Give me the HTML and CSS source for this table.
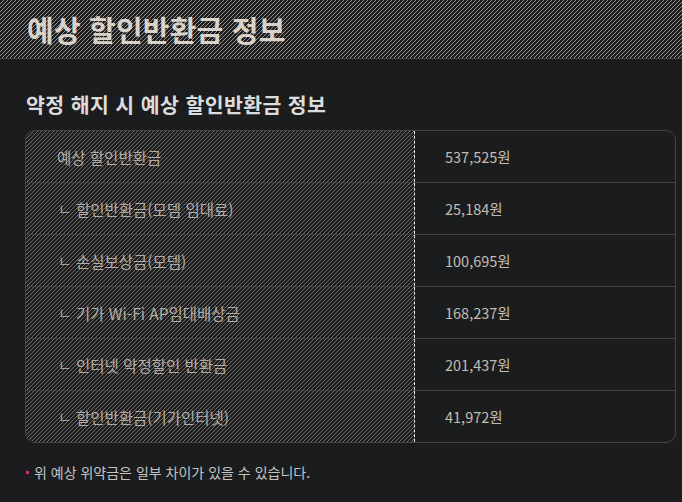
FILE: index.html
```html
<!DOCTYPE html>
<html lang="ko">
<head>
<meta charset="utf-8">
<link rel="stylesheet" href="styles.css">
</head>
<body>
<header class="top">
  <h1 class="title">예상 할인반환금 정보</h1>
</header>
<main class="main">
  <h2 class="subtitle">약정 해지 시 예상 할인반환금 정보</h2>
  <div class="table">
    <div class="row">
      <div class="label">예상 할인반환금</div>
      <div class="value">537,525원</div>
    </div>
    <div class="row">
      <div class="label sub"><span class="mark">ㄴ</span>할인반환금(모뎀 임대료)</div>
      <div class="value">25,184원</div>
    </div>
    <div class="row">
      <div class="label sub"><span class="mark">ㄴ</span>손실보상금(모뎀)</div>
      <div class="value">100,695원</div>
    </div>
    <div class="row">
      <div class="label sub"><span class="mark">ㄴ</span>기가 Wi-Fi AP임대배상금</div>
      <div class="value">168,237원</div>
    </div>
    <div class="row">
      <div class="label sub"><span class="mark">ㄴ</span>인터넷 약정할인 반환금</div>
      <div class="value">201,437원</div>
    </div>
    <div class="row">
      <div class="label sub"><span class="mark">ㄴ</span>할인반환금(기가인터넷)</div>
      <div class="value">41,972원</div>
    </div>
  </div>
  <p class="note"><span class="dot"></span>위 예상 위약금은 일부 차이가 있을 수 있습니다.</p>
</main>
</body>
</html>
```

FILE: styles.css
```css
html, body {
  margin: 0;
  padding: 0;
  background: #1b1c1e;
  font-family: "Noto Sans CJK KR", "Noto Sans", sans-serif;
}
.top {
  height: 58px;
  border-bottom: 1px solid #4a4a4a;
  background-color: #1e1e1e;
  background-image: linear-gradient(135deg, #909090 0 9%, transparent 9% 41%, #909090 41% 59%, transparent 59% 91%, #909090 91%);
  background-size: 4px 4px;
  display: flex;
  align-items: center;
  padding-left: 27px;
}
.title {
  margin: 0;
  font-size: 29px;
  font-weight: 700;
  color: #d8d2ca;
  letter-spacing: 0.2px;
  line-height: 1;
}
.main {
  padding: 0 6px 0 25px;
}
.subtitle {
  margin: 33px 0 0 1px;
  font-size: 20.5px;
  font-weight: 700;
  color: #dcdcdc;
  letter-spacing: 0.4px;
  line-height: 24px;
}
.table {
  margin-top: 14px;
  width: 649px;
  border: 1px solid #444;
  border-radius: 10px;
  overflow: hidden;
}
.row {
  display: flex;
  height: 51px;
  border-top: 1px solid #444;
}
.row:first-child {
  border-top: none;
}
.label {
  width: 389px;
  border-right: 1px dashed #e8e8e8;
  background-color: #1e1e1e;
  background-image: linear-gradient(135deg, #6e6e6e 0 9%, transparent 9% 41%, #6e6e6e 41% 59%, transparent 59% 91%, #6e6e6e 91%);
  background-size: 4px 4px;
  display: flex;
  align-items: center;
  padding-left: 31px;
  box-sizing: border-box;
  font-size: 15.5px;
  color: #b3aca4;
}
.label.sub {
  padding-left: 32px;
}
.mark {
  display: inline-block;
  width: 18px;
  font-size: 15px;
  color: #a8a09a;
}
.value {
  flex: 1;
  display: flex;
  align-items: center;
  padding-left: 30px;
  font-size: 14.5px;
  color: #c2bcb4;
}
.note {
  margin: 19px 0 0 1px;
  font-size: 14px;
  color: #c4c4c4;
  display: flex;
  align-items: center;
}
.dot {
  width: 3px;
  height: 3px;
  background: #d0307a;
  margin-right: 5px;
}
```
